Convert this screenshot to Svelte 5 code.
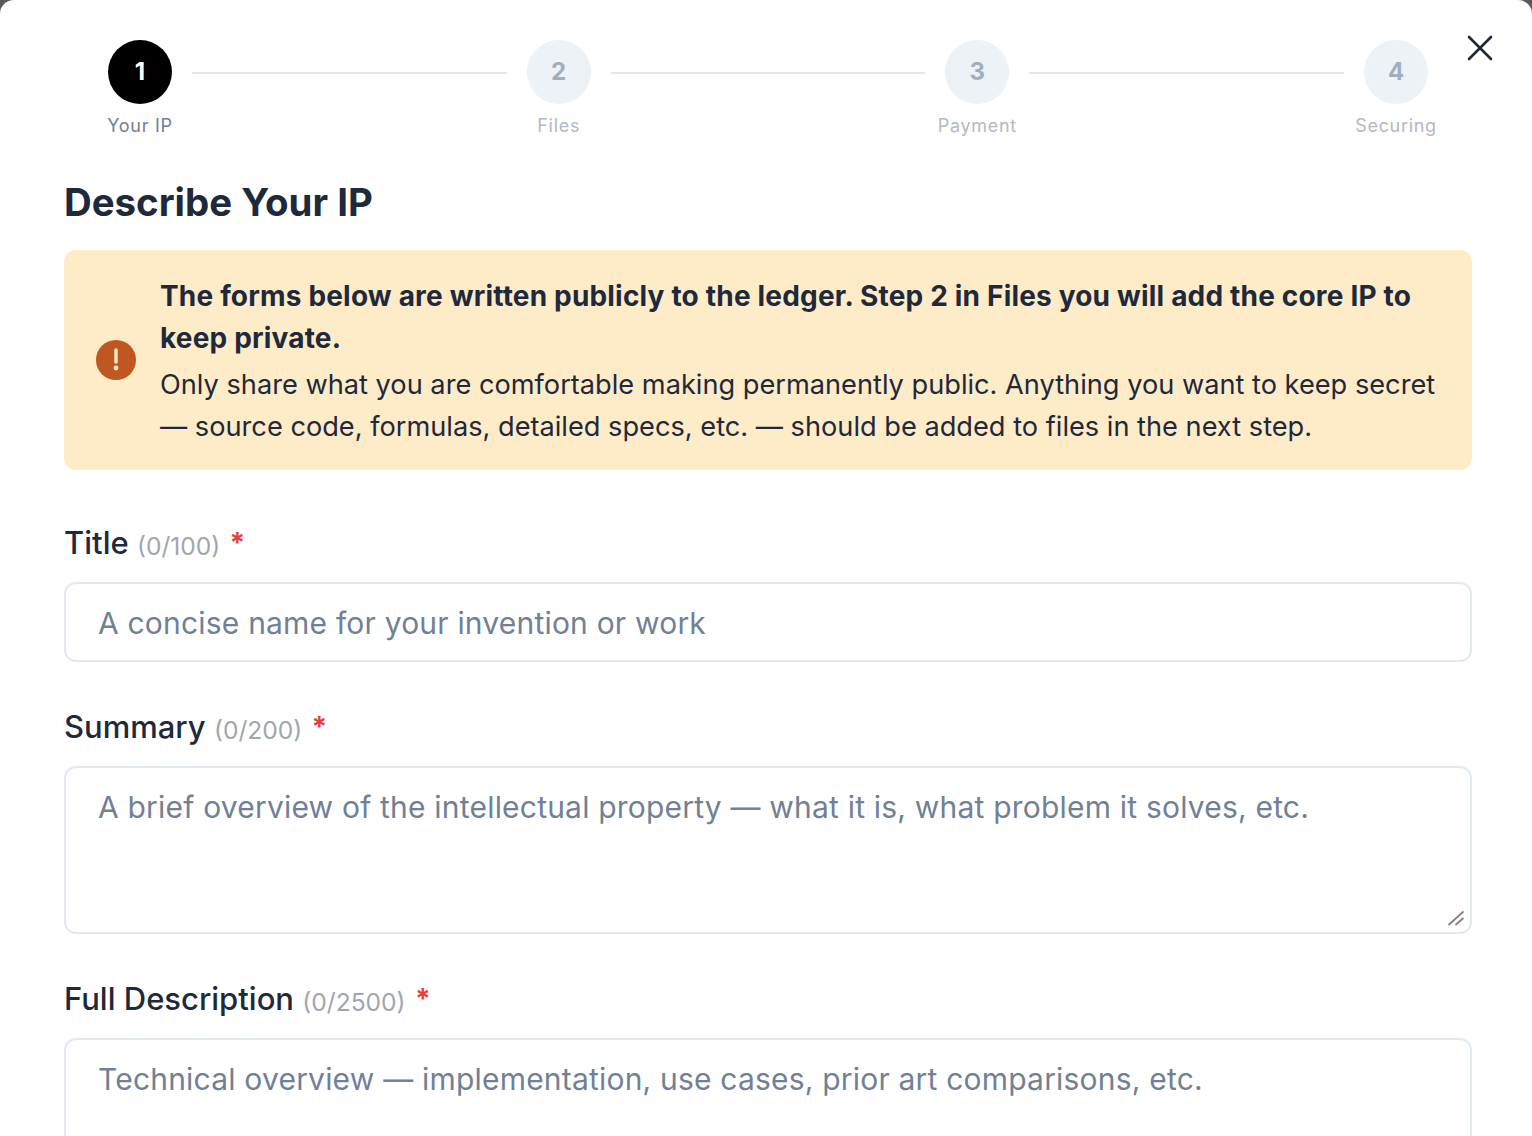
<script>
	const steps = [
		{ n: 1, label: 'Your IP', active: true },
		{ n: 2, label: 'Files' },
		{ n: 3, label: 'Payment' },
		{ n: 4, label: 'Securing' }
	];
</script>

<div class="modal">
	<button class="close" aria-label="Close">
		<svg width="28" height="28" viewBox="0 0 28 28" fill="none" stroke="#1e293b" stroke-width="2.6" stroke-linecap="round">
			<path d="M3 3 L25 25 M25 3 L3 25" />
		</svg>
	</button>

	<div class="stepper">
		{#each steps as step, i}
			{#if i > 0}
				<div class="line"></div>
			{/if}
			<div class="step" class:active={step.active}>
				<div class="circle">{step.n}</div>
				<div class="step-label">{step.label}</div>
			</div>
		{/each}
	</div>

	<h1>Describe Your IP</h1>

	<div class="notice">
		<svg class="notice-icon" width="40" height="40" viewBox="0 0 40 40">
			<circle cx="20" cy="20" r="20" fill="#c05621" />
			<path d="M20 10 V22" stroke="#feebc8" stroke-width="3.4" stroke-linecap="round" />
			<circle cx="20" cy="28" r="2.4" fill="#feebc8" />
		</svg>
		<div class="notice-text">
			<p class="strong">The forms below are written publicly to the ledger. Step 2 in Files you will add the core IP to keep private.</p>
			<p>Only share what you are comfortable making permanently public. Anything you want to keep secret — source code, formulas, detailed specs, etc. — should be added to files in the next step.</p>
		</div>
	</div>

	<div class="field">
		<div class="label">Title <span class="count">(0/100)</span> <span class="req">*</span></div>
		<input type="text" placeholder="A concise name for your invention or work" />
	</div>

	<div class="field">
		<div class="label">Summary <span class="count">(0/200)</span> <span class="req">*</span></div>
		<div class="area">
			<textarea placeholder="A brief overview of the intellectual property — what it is, what problem it solves, etc."></textarea>
			<svg class="grip" width="16" height="16" viewBox="0 0 16 16" fill="none" stroke="#808080" stroke-width="1.8">
				<path d="M0.5 15 L15.5 1.5 M7.5 15 L15.5 8" />
			</svg>
		</div>
	</div>

	<div class="field">
		<div class="label">Full Description <span class="count">(0/2500)</span> <span class="req">*</span></div>
		<textarea class="tall" placeholder="Technical overview — implementation, use cases, prior art comparisons, etc."></textarea>
	</div>
</div>

<style>
	:global(body) {
		margin: 0;
		background: #5a5a5a;
		overflow: hidden;
	}

	.modal {
		position: relative;
		box-sizing: border-box;
		height: 1136px;
		overflow: hidden;
		padding: 40px 60px 0 64px;
		background: #fff;
		border-radius: 14px 14px 0 0;
		font-family: Inter, "Liberation Sans", sans-serif;
		color: #1e293b;
	}

	.close {
		position: absolute;
		top: 34px;
		right: 38px;
		padding: 0;
		border: none;
		background: none;
		line-height: 0;
		cursor: pointer;
	}

	.stepper {
		display: flex;
		align-items: flex-start;
		padding: 0 44px;
	}

	.step {
		flex: none;
		width: 64px;
		display: flex;
		flex-direction: column;
		align-items: center;
	}

	.circle {
		box-sizing: border-box;
		width: 64px;
		height: 64px;
		padding-bottom: 2px;
		border-radius: 50%;
		background: #edf2f7;
		color: #a0aec0;
		font-size: 24px;
		font-weight: 700;
		display: flex;
		align-items: center;
		justify-content: center;
	}

	.active .circle {
		background: #000;
		color: #fff;
	}

	.step-label {
		margin-top: 11px;
		font-size: 18px;
		line-height: 22px;
		letter-spacing: 0.7px;
		white-space: nowrap;
		color: #b4b8c2;
	}

	.active .step-label {
		color: #718096;
	}

	.line {
		flex: 1;
		height: 2px;
		margin: 32px 20px 0;
		background: #e2e8f0;
	}

	h1 {
		margin: 43px 0 26px;
		font-size: 38.4px;
		line-height: 44px;
		font-weight: 700;
		color: #1e293b;
	}

	.notice {
		display: flex;
		align-items: center;
		gap: 24px;
		padding: 25px 32px 22px;
		border-radius: 12px;
		background: #feebc8;
		color: #1e293b;
		font-size: 27.2px;
		line-height: 42px;
	}

	.notice-icon {
		flex: none;
		margin-top: -3px;
	}

	.notice p {
		margin: 0;
	}

	.notice .strong {
		margin-bottom: 5px;
		font-size: 28px;
		font-weight: 700;
		letter-spacing: 0.18px;
	}

	.field {
		margin-top: 43px;
	}

	.notice + .field {
		margin-top: 51px;
	}

	.label {
		margin-bottom: 17px;
		font-size: 31px;
		line-height: 44px;
		font-weight: 500;
		color: #1e293b;
	}

	.count {
		font-size: 24.6px;
		line-height: 1;
		font-weight: 400;
		color: #a0a6b1;
		vertical-align: -1px;
	}

	.req {
		margin-left: 1px;
		font-size: 28px;
		line-height: 1;
		font-weight: 700;
		color: #e53e3e;
		vertical-align: 1px;
	}

	.area {
		position: relative;
	}

	.grip {
		position: absolute;
		right: 8px;
		bottom: 8px;
		pointer-events: none;
	}

	input,
	textarea {
		display: block;
		box-sizing: border-box;
		width: 100%;
		padding: 17px 32px 15px;
		border: 2px solid #e2e8f0;
		border-radius: 12px;
		background: #fff;
		font-family: inherit;
		font-size: 30px;
		letter-spacing: 0.2px;
		line-height: 44px;
		color: #1a202c;
		outline: none;
	}

	input {
		height: 80px;
	}

	textarea {
		height: 168px;
		resize: none;
	}

	textarea.tall {
		height: 300px;
	}

	input::placeholder,
	textarea::placeholder {
		color: #718096;
		opacity: 1;
	}
</style>
